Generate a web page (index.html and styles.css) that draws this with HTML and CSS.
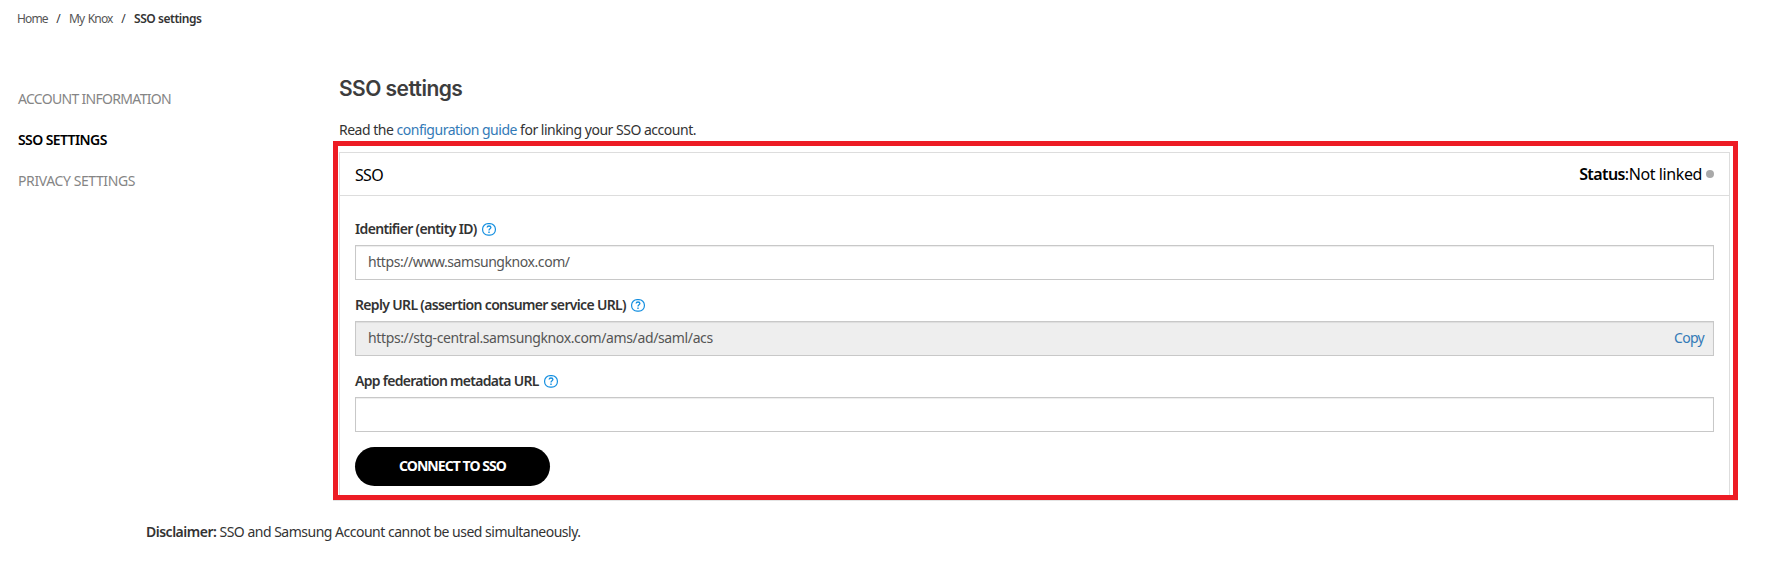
FILE: index.html
```
<!DOCTYPE html>
<html lang="en">
<head>
<meta charset="utf-8">
<title>SSO settings</title>
<link rel="stylesheet" href="styles.css">
</head>
<body>
<svg class="defs" aria-hidden="true">
  <symbol id="help" viewBox="0 0 14 13">
    <rect x=".6" y=".6" width="12.8" height="11.6" rx="5.5" fill="none" stroke="currentColor" stroke-width="1.2"/>
    <path d="M5.1 4.5C5.2 3.5 5.9 3 7 3c1.200 0 1.900.6 1.900 1.500C8.900 5.700 7 5.700 7 7.400" fill="none" stroke="currentColor" stroke-width="1.300"/>
    <path d="M6.300 8.600h1.400V10H6.300z" fill="currentColor"/>
  </symbol>
</svg>
<nav class="breadcrumb">
  <a class="crumb crumb-home">Home</a><span class="slash">/</span><a class="crumb crumb-knox">My Knox</a><span class="slash">/</span><b class="crumb-current">SSO settings</b>
</nav>
<div class="layout">
  <aside class="side">
    <a class="side-account">ACCOUNT INFORMATION</a>
    <a class="side-sso">SSO SETTINGS</a>
    <a class="side-privacy">PRIVACY SETTINGS</a>
  </aside>
  <main class="main">
    <h1 class="title">SSO settings</h1>
    <p class="intro">Read the <a class="link">configuration guide</a> for linking your SSO account.</p>
    <div class="highlight">
      <section class="card">
        <header class="card-head">
          <span class="card-name">SSO</span>
          <span class="status"><b class="status-label">Status</b><span class="status-value">:Not linked</span><i class="dot"></i></span>
        </header>
        <div class="card-body">
          <div class="label"><span class="label-id">Identifier (entity ID)</span><svg class="help"><use href="#help"/></svg></div>
          <div class="field"><span class="url-id">https://www.samsungknox.com/</span></div>
          <div class="label"><span class="label-reply">Reply URL (assertion consumer service URL)</span><svg class="help"><use href="#help"/></svg></div>
          <div class="field field-readonly"><span class="url-reply">https://stg-central.samsungknox.com/ams/ad/saml/acs</span><a class="copy">Copy</a></div>
          <div class="label"><span class="label-meta">App federation metadata URL</span><svg class="help"><use href="#help"/></svg></div>
          <div class="field"></div>
          <button class="connect">CONNECT TO SSO</button>
        </div>
      </section>
    </div>
  </main>
</div>
<p class="disclaimer"><b class="disclaimer-label">Disclaimer:</b> SSO and Samsung Account cannot be used simultaneously.</p>
</body>
</html>
```
FILE: styles.css
```
* { box-sizing: border-box; }
body {
  margin: 0;
  background: #fff;
  color: #333;
  font: 14px/20px "Noto Sans", "Open Sans", sans-serif;
}
b { font-weight: 600; }
.defs { display: none; }

.breadcrumb {
  display: flex;
  height: 38px;
  padding-left: 17px;
  font-size: 12px;
  line-height: 38px;
  white-space: nowrap;
}
.crumb { color: #555; }
.crumb-home { width: 31px; letter-spacing: -.85px; }
.crumb-knox { width: 44px; letter-spacing: -.85px; word-spacing: 1.2px; }
.slash { width: 21px; text-align: center; }
.crumb-current { letter-spacing: -.45px; }

.layout { display: flex; }
.side {
  display: flex;
  flex-direction: column;
  gap: 21px;
  width: 333px;
  padding: 51px 0 0 18px;
  color: #858585;
}
.side-account { letter-spacing: -.69px; }
.side-sso { color: #000; font-weight: 600; letter-spacing: -.6px; }
.side-privacy { letter-spacing: -.4px; }

.main { width: 1405px; }
.title {
  margin: 0;
  padding: 36px 0 0 6px;
  color: #3d3d3d;
  font: 600 21px/30px Inter, sans-serif;
  letter-spacing: -.55px;
}
.intro {
  margin: 16px 0 1px;
  padding-left: 6px;
  letter-spacing: -.49px;
}
.link, .copy { color: #337ab7; }

.highlight {
  height: 359px;
  border: 5px solid #ed1c24;
  padding: 6px 3px 0 1px;
  box-shadow: 0 1px 0 #e4e4e4;
}
.card {
  height: 343px;
  border: 1px solid #ddd;
  border-bottom: 0;
}
.card-head {
  display: flex;
  justify-content: space-between;
  height: 43px;
  padding: 0 15px;
  border-bottom: 1px solid #ddd;
  color: #000;
  font-size: 16px;
  line-height: 44px;
}
.card-name { letter-spacing: -.69px; }
.status { display: flex; align-items: center; line-height: 42px; }
.status-label { letter-spacing: -.6px; }
.status-value { letter-spacing: -.4px; }
.dot { width: 8px; height: 8px; margin-left: 4px; border-radius: 50%; background: #a9a9a9; }

.card-body { padding: 23px 15px 0; }
.label {
  display: flex;
  align-items: center;
  gap: 5px;
  height: 20px;
  font-weight: 600;
}
.label-id { letter-spacing: -.65px; }
.label-reply { letter-spacing: -.66px; }
.label-meta { letter-spacing: -.71px; }
.help { width: 14px; height: 13px; color: #148fe0; }
.field {
  display: flex;
  align-items: center;
  justify-content: space-between;
  height: 35px;
  margin: 6px 0 15px;
  padding: 0 9px 2px 12px;
  border: 1px solid #c8c8c8;
  box-shadow: inset 0 1px 1px rgba(0, 0, 0, .075);
  color: #555;
}
.field-readonly { background-color: #eee; }
.url-id { letter-spacing: -.43px; }
.url-reply { letter-spacing: -.37px; }
.copy { letter-spacing: -.7px; }
.connect {
  display: block;
  width: 195px;
  height: 39px;
  margin-top: 15px;
  padding: 0 0 1px;
  border: 0;
  border-radius: 20px;
  background: #000;
  color: #fff;
  font: 700 14px/20px "Noto Sans", "Open Sans", sans-serif;
  letter-spacing: -.94px;
}

.disclaimer {
  margin: 22px 0 0 146px;
  letter-spacing: -.5px;
}
```
